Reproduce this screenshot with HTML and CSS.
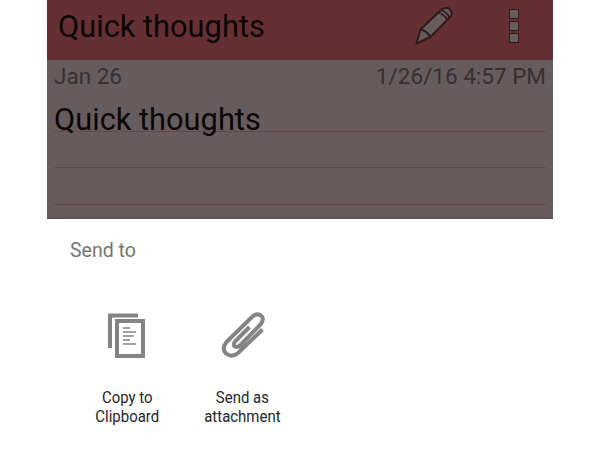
FILE: index.html
```html
<!DOCTYPE html>
<html lang="en">
<head>
<meta charset="utf-8">
<title>Quick thoughts</title>
<link rel="stylesheet" href="styles.css">
</head>
<body>
<main class="screen">
  <header class="appbar">
    <h1 class="appbar-title">Quick thoughts</h1>
    <svg class="icon-pencil" width="40" height="40" viewBox="0 0 40 40">
      <path d="M2.500 38.500 L6.500 24.500 L27 5 Q31 1.500 35 3.500 Q39 6.500 37 11 L16.500 32 Z" fill="#675c5d" stroke="#2f1a1c" stroke-width="2" stroke-linejoin="round"/>
      <path d="M6.500 24.500 Q13 26 16.500 32 M25 8 Q31 10 33.500 15 M28 5.500 Q33 7.500 35.500 12.500" fill="none" stroke="#2f1a1c" stroke-width="1.800"/>
    </svg>
    <div class="overflow">
      <span class="dot"></span>
      <span class="dot"></span>
      <span class="dot"></span>
    </div>
  </header>
  <section class="note">
    <div class="note-meta">
      <span>Jan 26</span>
      <span>1/26/16 4:57 PM</span>
    </div>
    <div class="note-lines">
      <div class="note-line note-line-text">Quick thoughts</div>
      <div class="note-line"></div>
      <div class="note-line"></div>
    </div>
  </section>
</main>
<section class="sheet">
  <h2 class="sheet-title">Send to</h2>
  <div class="targets">
    <div class="target">
      <svg class="target-icon" width="48" height="48" viewBox="0 0 48 48">
        <path d="M6 37 V4.500 H34" fill="none" stroke="#848484" stroke-width="4"/>
        <rect x="13" y="10" width="26" height="35" fill="#fff" stroke="#848484" stroke-width="4"/>
        <path d="M19 17 H26 M19 21 H32 M19 25 H30 M19 29 H26 M19 33 H32" stroke="#848484" stroke-width="1.600"/>
      </svg>
      <div class="target-label">Copy to<br>Clipboard</div>
    </div>
    <div class="target">
      <svg class="target-icon" width="48" height="48" viewBox="0 0 48 48">
        <path d="M30.500 16 L16 30.500 Q13.500 34 16 35.500 Q18.500 37 21.500 34 L41.500 13.500 Q45.500 8.500 42.500 5 Q38.500 1.500 33.500 5.500 L8 30.500 Q2 37.500 7 42.500 Q13 47 19 42 L43.500 18.500" fill="none" stroke="#848484" stroke-width="4" stroke-linejoin="round"/>
      </svg>
      <div class="target-label">Send as<br>attachment</div>
    </div>
  </div>
</section>
</body>
</html>
```
FILE: styles.css
```css
* { box-sizing: border-box; }
html, body { margin: 0; height: 100%; background: #fff; overflow: hidden; }
body { font-family: Roboto, "Liberation Sans", sans-serif; }

.screen { margin: 0 47px; height: 219px; background: #675c5d; box-shadow: inset 0 -3px 2px -2px #564c4d; }

.appbar { height: 60px; background: #652f33; display: flex; align-items: center; padding: 0 34px 0 11px; color: #0a0606; }
.appbar-title { margin: 0 0 7px; font-size: 30.800px; font-weight: 400; line-height: 40px; flex: 1; }
.icon-pencil { margin: 0 55px 10px 0; display: block; }
.overflow { display: flex; flex-direction: column; gap: 2px; margin-bottom: 8px; }
.dot { width: 10px; height: 10px; background: #675c5d; border: 1px solid #2f1a1c; display: block; }

.note { padding: 0 7px; }
.note-meta { display: flex; justify-content: space-between; font-size: 22.500px; line-height: 24px; padding-top: 4px; color: #363030; }
.note-lines { margin-top: 7px; }
.note-line { height: 37px; border-bottom: 1px solid #6b4549; }
.note-line:nth-child(2) { height: 36px; }
.note-line-text { font-size: 30.800px; line-height: 50px; color: #0a0606; white-space: nowrap; }

.sheet { padding: 21px 0 0 70px; }
.sheet-title { margin: 0; font-size: 19.500px; font-weight: 400; line-height: 22px; color: #757575; }
.targets { display: flex; margin: 49px 0 0 8px; gap: 15px; }
.target { width: 100px; display: flex; flex-direction: column; align-items: center; }
.target-icon { display: block; }
.target-label { margin: 29px 2px 0 0; font-size: 17px; line-height: 19px; text-align: center; color: #262626; transform: scaleX(0.88); white-space: nowrap; }
```
